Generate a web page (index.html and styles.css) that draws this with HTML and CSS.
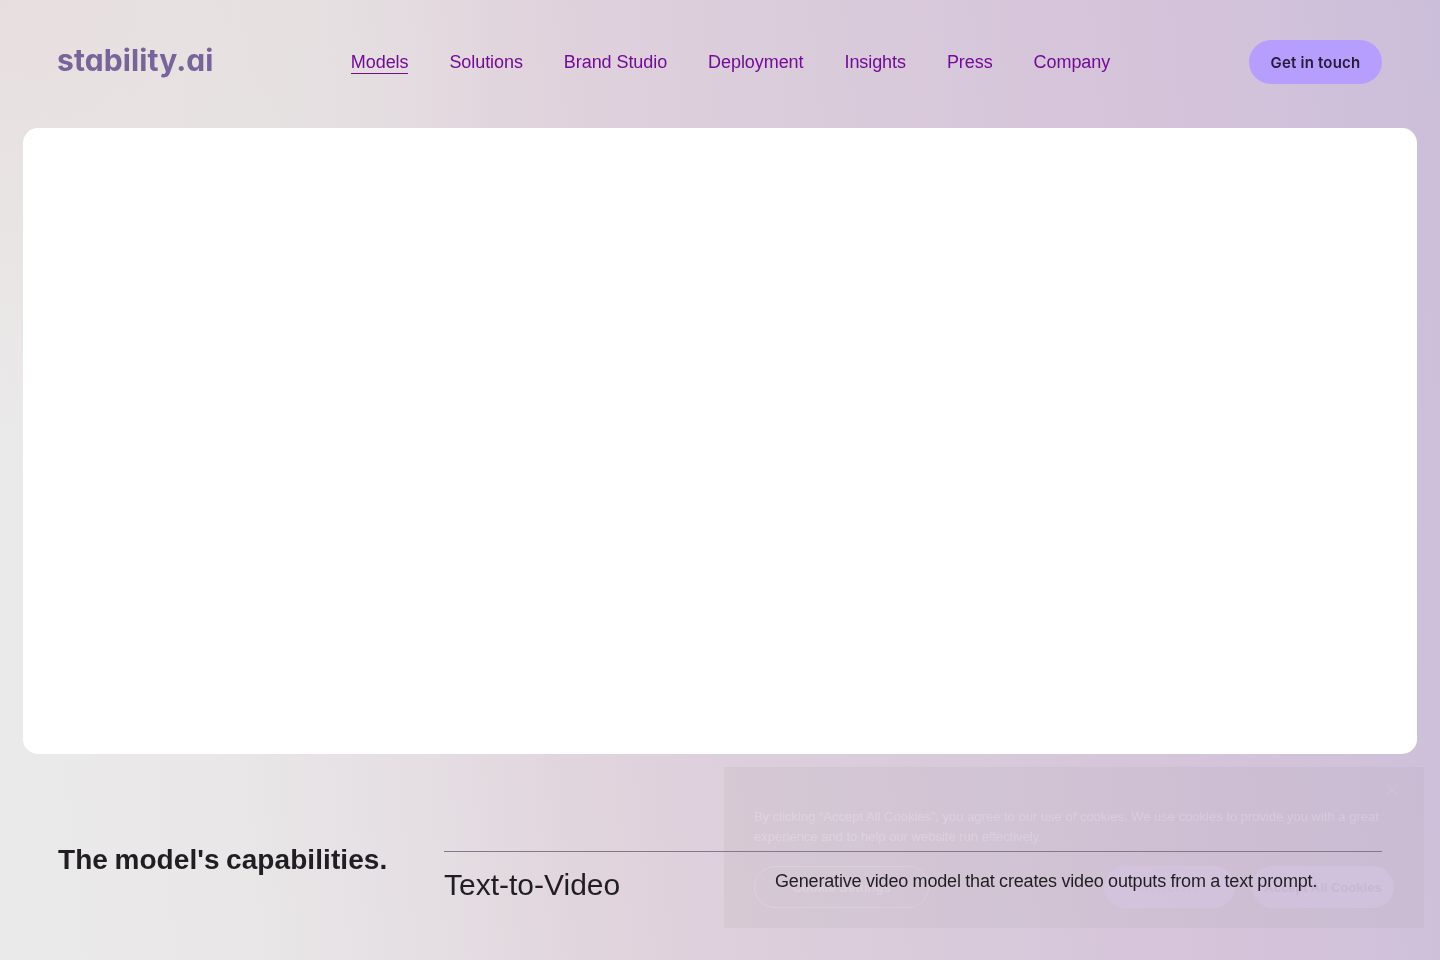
FILE: index.html
```html
<!DOCTYPE html>
<html lang="en">
<head>
<meta charset="utf-8">
<meta name="viewport" content="width=device-width, initial-scale=1">
<title>Stability AI</title>
<link rel="stylesheet" href="styles.css">
</head>
<body>
<header class="header">
  <a class="logo">stability.ai</a>
  <nav class="nav">
    <a class="nav-link active">Models</a>
    <a class="nav-link">Solutions</a>
    <a class="nav-link">Brand Studio</a>
    <a class="nav-link">Deployment</a>
    <a class="nav-link">Insights</a>
    <a class="nav-link">Press</a>
    <a class="nav-link">Company</a>
  </nav>
  <a class="cta">Get in touch</a>
</header>
<main>
  <section class="hero"></section>
  <section class="capabilities">
    <h2 class="cap-title">The model's capabilities.</h2>
    <div class="cap-row">
      <h3 class="cap-name">Text-to-Video</h3>
      <p class="cap-text">Generative video model that creates video outputs from a text prompt.</p>
    </div>
  </section>
</main>
<aside class="cookies">
  <svg class="close" viewBox="0 0 12 12" width="12" height="12"><path d="M1 1L11 11M11 1L1 11" stroke="#fff" stroke-width="1.5" fill="none"/></svg>
  <p class="cookie-text">By clicking “Accept All Cookies”, you agree to our use of cookies. We use cookies to provide you with a great experience and to help our website run effectively.</p>
  <div class="cookie-actions">
    <span class="pill outline">Cookie Settings</span>
    <span class="pill reject">Reject All</span>
    <span class="pill accept">Accept All Cookies</span>
  </div>
</aside>
</body>
</html>
```
FILE: styles.css
```css
* { box-sizing: border-box; }
body {
  margin: 0;
  height: 960px;
  overflow: hidden;
  font-family: "Liberation Sans", Arial, sans-serif;
  color: #201e22;
  background:
    radial-gradient(ellipse 520px 440px at 0 0, rgba(231, 220, 221, .85), rgba(230, 224, 221, .4) 60%, rgba(232, 228, 224, 0)),
    linear-gradient(84deg, #ebeaeb 0, #e9e7e8 16%, #e4dde2 30%, #e1d5dd 38%, #decfdc 48%, #d9cadb 63%, #d5c3da 80%, #d0c1da 92%, #cbbeda 100%);
}
.header {
  display: flex;
  align-items: center;
  justify-content: space-between;
  height: 128px;
  padding: 0 58px 4px;
}
.logo {
  width: 155px;
  padding-bottom: 4px;
  font: 700 30px/36px Inter, sans-serif;
  font-feature-settings: "cv11";
  letter-spacing: .1px;
  text-indent: -1px;
  color: #77649a;
  white-space: nowrap;
}
.nav { display: flex; gap: 41px; margin-right: 1px; }
.nav-link {
  font-size: 18px;
  line-height: 22px;
  letter-spacing: -.07px;
  color: #730b96;
  white-space: nowrap;
  border-bottom: 1px solid transparent;
}
.nav-link.active { border-color: #730b96; }
.cta {
  display: flex;
  align-items: center;
  justify-content: center;
  width: 133px;
  height: 44px;
  padding-top: 2px;
  border-radius: 22px;
  background: #b69eff;
  color: #251a38;
  font: 600 15px/20px Inter, sans-serif;
  letter-spacing: .2px;
}
.hero {
  height: 626px;
  margin: 0 23px;
  border-radius: 15px;
  background: #fff;
}
.capabilities {
  display: grid;
  grid-template-columns: 386px 1fr;
  padding: 88px 58px 0;
}
.cap-title { margin: 0; font-size: 28px; line-height: 36px; word-spacing: -1.4px; letter-spacing: .07px; white-space: nowrap; }
.cap-row {
  display: grid;
  grid-template-columns: 331px 1fr;
  margin-top: 9px;
  padding-top: 15px;
  border-top: 1px solid #85788a;
}
.cap-name { margin: 0; font-size: 30px; line-height: 36px; font-weight: 400; }
.cap-text { margin: 3px 0 0; font-size: 18px; line-height: 23px; word-spacing: -.4px; letter-spacing: -.16px; white-space: nowrap; }
.cookies {
  position: fixed;
  left: 724px;
  top: 767px;
  width: 700px;
  height: 161px;
  padding: 40px 30px 20px;
  background: rgba(90, 110, 90, .055);
  z-index: -1;
}
.close { position: absolute; right: 26px; top: 17px; opacity: .08; }
.cookie-text { margin: 0; font-size: 13px; line-height: 20px; color: rgba(255, 255, 255, .2); }
.cookie-actions { display: flex; margin-top: 19px; }
.pill {
  display: flex;
  align-items: center;
  justify-content: center;
  height: 42px;
  border-radius: 21px;
  font-size: 13px;
  font-weight: 700;
  white-space: nowrap;
}
.outline { width: 175px; border: 1px solid rgba(255, 255, 255, .15); color: rgba(255, 255, 255, .15); }
.reject { width: 131px; margin-left: auto; background: rgba(216, 198, 230, .45); color: rgba(80, 60, 100, .02); }
.accept { width: 142px; margin-left: 17px; background: rgba(216, 198, 230, .45); color: rgba(80, 60, 100, .07); }
```
